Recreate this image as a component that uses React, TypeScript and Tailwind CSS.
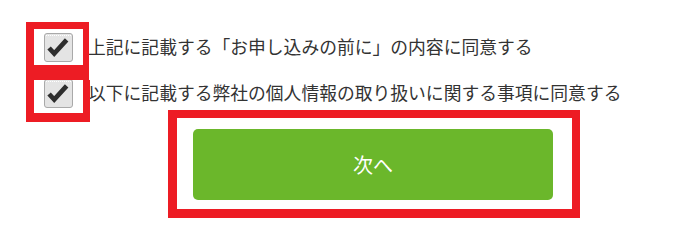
import React from 'react';

const font = { fontFamily: '"Noto Sans CJK JP", "Noto Sans", sans-serif' };

function CheckBox() {
  return (
    <div className="flex flex-col w-[29px] h-[29px] shrink-0 rounded-[3px] border border-[#a9a9a9] bg-[#e4e4e4] px-[1px]">
      <div className="mt-[1px] border-t border-dotted border-white" />
      <svg viewBox="0 0 29 28" className="w-[25px] h-[24px] mx-auto">
        <polyline
          points="3.5,14 9.5,20.5 24,4.5"
          fill="none"
          stroke="#2e2e2e"
          strokeWidth="5.5"
          strokeLinejoin="miter"
        />
      </svg>
    </div>
  );
}

function AgreeRow({ label }: { label: string }) {
  return (
    <div className="flex items-center gap-[15px] h-[46px] pl-[44px]">
      <CheckBox />
      <span className="text-[17.8px] text-[#333333] whitespace-nowrap leading-none">{label}</span>
    </div>
  );
}

export default function App() {
  return (
    <div className="relative w-[688px] h-[220px] bg-white overflow-hidden" style={font}>
      <div className="flex flex-col pt-[24px]">
        <AgreeRow label="上記に記載する「お申し込みの前に」の内容に同意する" />
        <AgreeRow label="以下に記載する弊社の個人情報の取り扱いに関する事項に同意する" />
        <div className="flex pt-[13px] pl-[193px]">
          <button className="w-[360px] h-[71px] rounded-[5px] bg-[#6bb72b] text-white text-[20px] flex items-center justify-center">
            次へ
          </button>
        </div>
      </div>

      {/* annotation frames drawn over the form */}
      <div className="absolute left-[26px] top-[22px] w-[63px] h-[58px] border-[#ed1c24] border-t-[7px] border-l-[8px] border-r-[6px] border-b-[15px]" />
      <div className="absolute left-[26px] top-[80px] w-[64px] h-[42px] border-[#ed1c24] border-l-[8px] border-r-[7px] border-b-[9px]" />
      <div className="absolute left-[168px] top-[110px] w-[412px] h-[108px] border-[#ed1c24] border-[9px] border-t-[8px] border-r-[8px]" />
    </div>
  );
}
